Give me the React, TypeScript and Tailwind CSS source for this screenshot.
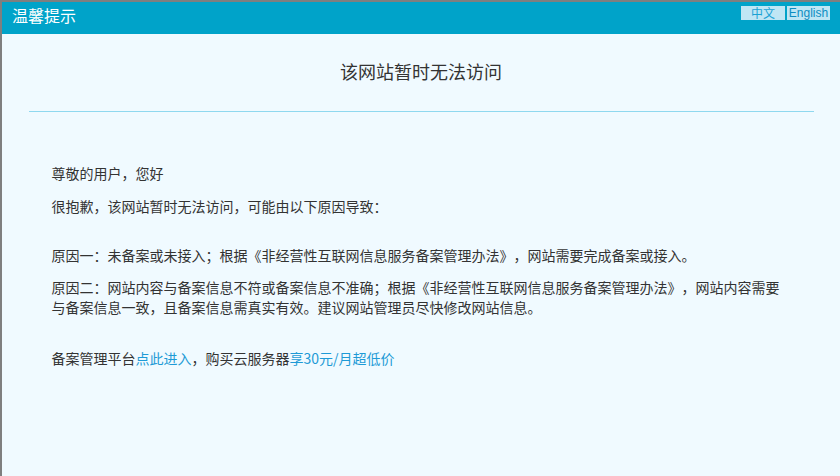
export default function App() {
  const font = { fontFamily: '"Noto Sans CJK SC", "Noto Sans", sans-serif' };
  return (
    <div className="w-[840px] h-[476px] bg-[#f0faff] border-l-2 border-t-2 border-[#7f7f7f] overflow-hidden [text-spacing-trim:space-all]" style={font}>
      <div className="h-[32px] bg-[#00a3c9] flex items-start justify-between">
        <div className="text-white text-[16px] leading-[20px] pl-[10px] pt-[3px]">温馨提示</div>
        <div className="flex gap-[2px] pt-[4px] pr-[10px]">
          <span className="h-[14px] w-[44px] bg-[#bfe6f4] text-[#1aa2d4] text-[12px] leading-[14px] text-center">中文</span>
          <span className="h-[14px] w-[43px] bg-[#bfe6f4] text-[#0d8dc2] text-[12px] leading-[14px] text-center" style={{ fontFamily: '"Liberation Sans", sans-serif' }}>English</span>
        </div>
      </div>
      <div className="w-[785px] mx-auto">
        <div className="h-[77px] flex items-center justify-center text-[18px] text-[#333] pb-[2px]">
          该网站暂时无法访问
        </div>
        <div className="h-px bg-[#8fd8ef]" />
        <div className="pl-[23px] w-[765px] text-[14px] leading-[20px] text-[#333]">
          <p className="mt-[51px]">尊敬的用户，您好</p>
          <p className="mt-[13px]">很抱歉，该网站暂时无法访问，可能由以下原因导致：</p>
          <p className="mt-[29px]">原因一：未备案或未接入；根据《非经营性互联网信息服务备案管理办法》，网站需要完成备案或接入。</p>
          <p className="mt-[12px] w-[738px]">原因二：网站内容与备案信息不符或备案信息不准确；根据《非经营性互联网信息服务备案管理办法》，网站内容需要与备案信息一致，且备案信息需真实有效。建议网站管理员尽快修改网站信息。</p>
          <p className="mt-[31px]">
            备案管理平台<span className="text-[#1e9ad6]">点此进入</span>，购买云服务器<span className="text-[#1e9ad6]">享30元/月超低价</span>
          </p>
        </div>
      </div>
    </div>
  );
}
